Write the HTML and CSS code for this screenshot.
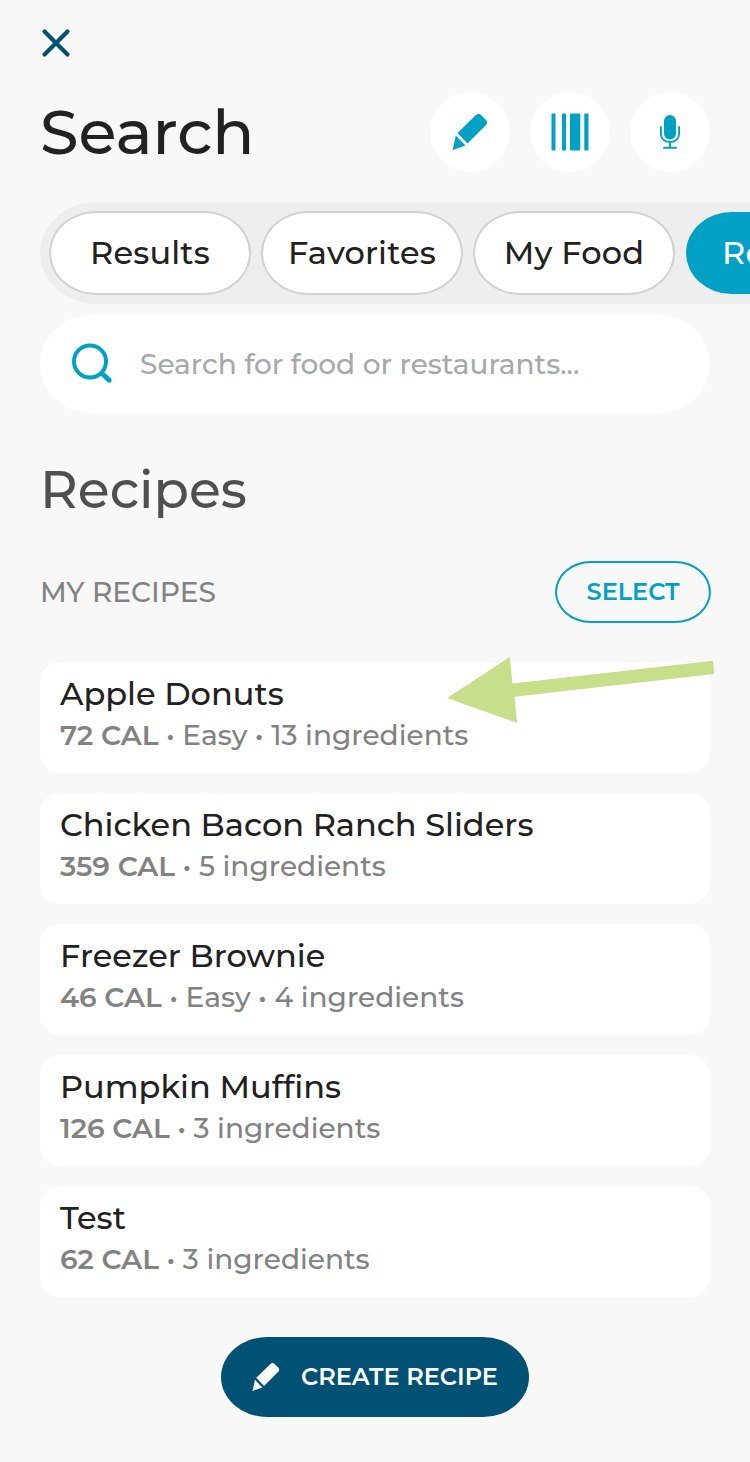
FILE: index.html
```html
<!DOCTYPE html>
<html lang="en">
<head>
    <meta charset="UTF-8">
    <meta name="viewport" content="width=device-width, initial-scale=1.0">
    <title>Search Recipes</title>
    <link rel="stylesheet" href="styles.css">
</head>
<body>
    <div class="container">
        <button class="close" type="button" aria-label="Close">
            <svg width="28" height="28" viewBox="0 0 28 28">
                <path d="M2.500 2.500 25.500 25.500M25.500 2.500 2.500 25.500" fill="none" stroke="currentColor" stroke-width="4.200" stroke-linecap="round"/>
            </svg>
        </button>

        <header class="header">
            <h1>Search</h1>
            <div class="actions">
                <button class="round-btn" type="button" aria-label="Quick add">
                    <svg width="36" height="36" viewBox="0 0 36 36" fill="currentColor">
                        <path d="M5.500 19 23.700 1.300Q26.500-1 29.200 1.200L34 6Q36.200 8.600 34 11L15.500 29.600Z"/>
                        <path d="M3.800 21.600 13.400 31.500.700 36Z"/>
                    </svg>
                </button>
                <button class="round-btn" type="button" aria-label="Scan barcode">
                    <svg width="38" height="38" viewBox="0 0 38 38" fill="currentColor">
                        <rect x="0.500" y="0.500" width="4" height="37" rx="0.700"/>
                        <rect x="11" y="0.500" width="4" height="37" rx="0.700"/>
                        <rect x="19" y="0.500" width="10.300" height="37" rx="0.700"/>
                        <rect x="33.300" y="0.500" width="4.200" height="37" rx="0.700"/>
                    </svg>
                </button>
                <button class="round-btn" type="button" aria-label="Voice search">
                    <svg width="20" height="34" viewBox="0 0 20 34">
                        <rect x="4" y="0" width="12" height="24.500" rx="6" fill="currentColor"/>
                        <path d="M.900 12V18Q.900 27 10 27T19.100 18V12M10 27V32.600M4 32.700H16" fill="none" stroke="currentColor" stroke-width="1.900" stroke-linecap="round"/>
                    </svg>
                </button>
            </div>
        </header>

        <nav class="tabs">
            <div class="tab">Results</div>
            <div class="tab">Favorites</div>
            <div class="tab">My Food</div>
            <div class="tab active">Recipes</div>
        </nav>

        <div class="search-box">
            <svg width="42" height="42" viewBox="0 0 42 42" fill="none" stroke="currentColor">
                <circle cx="19" cy="18.500" r="16" stroke-width="4"/>
                <path d="M31 30.500 38.200 37.200" stroke-width="5" stroke-linecap="round"/>
            </svg>
            <span>Search for food or restaurants...</span>
        </div>

        <h2>Recipes</h2>

        <div class="section-head">
            <h3>MY RECIPES</h3>
            <button class="select-btn" type="button">SELECT</button>
        </div>

        <div class="recipes">
            <div class="recipe">
                <div class="name">Apple Donuts</div>
                <div class="info"><b>72 CAL</b> • Easy • 13 ingredients</div>
                <svg class="arrow" width="268" height="68" viewBox="0 0 268 68">
                    <path d="M0 41 62.800 0 65.500 26.500 266 3.700 267.200 17 67.500 39.700 70 66Z" fill="#c7de8a"/>
                </svg>
            </div>
            <div class="recipe">
                <div class="name">Chicken Bacon Ranch Sliders</div>
                <div class="info"><b>359 CAL</b> • 5 ingredients</div>
            </div>
            <div class="recipe">
                <div class="name">Freezer Brownie</div>
                <div class="info"><b>46 CAL</b> • Easy • 4 ingredients</div>
            </div>
            <div class="recipe">
                <div class="name">Pumpkin Muffins</div>
                <div class="info"><b>126 CAL</b> • 3 ingredients</div>
            </div>
            <div class="recipe">
                <div class="name">Test</div>
                <div class="info"><b>62 CAL</b> • 3 ingredients</div>
            </div>
        </div>

        <button class="create-btn" type="button">
            <svg width="28" height="28" viewBox="0 0 36 36" fill="currentColor">
                <path d="M5.500 19 23.700 1.300Q26.500-1 29.200 1.200L34 6Q36.200 8.600 34 11L15.500 29.600Z"/>
                <path d="M3.800 21.600 13.400 31.500.700 36Z"/>
            </svg>
            <span>CREATE RECIPE</span>
        </button>
    </div>
</body>
</html>
```
FILE: styles.css
```css
* {
    box-sizing: border-box;
}

body {
    margin: 0;
    font-family: "Montserrat", "Inter", "Liberation Sans", sans-serif;
    font-weight: 500;
    background: #f8f8f8;
    color: #212121;
}

.container {
    width: 750px;
    height: 1462px;
    padding: 29px 40px 0;
    overflow: hidden;
}

svg {
    display: block;
    flex-shrink: 0;
    overflow: visible;
}

h1,
h2,
h3 {
    margin: 0;
    font-weight: 500;
    white-space: nowrap;
}

button {
    padding: 0;
    border: none;
    background: none;
    font-family: inherit;
}

.close {
    display: block;
    margin-left: 2px;
    color: #005173;
}

.header {
    display: flex;
    justify-content: space-between;
    align-items: center;
    height: 80px;
    margin-top: 35px;
}

h1 {
    font-size: 62px;
    line-height: 80px;
}

.actions {
    display: flex;
    gap: 20px;
}

.round-btn {
    display: flex;
    justify-content: center;
    align-items: center;
    width: 80px;
    height: 80px;
    border-radius: 50%;
    background: #fff;
    color: #00a1c4;
}

/* runs off the right edge of the screen */
.tabs {
    display: flex;
    gap: 10px;
    width: 870px;
    height: 102px;
    margin-top: 30px;
    padding: 9px;
    border-radius: 56px / 51px;
    background: #eee;
}

.tab {
    flex-shrink: 0;
    width: 202px;
    height: 84px;
    border: 2px solid #d0d3d4;
    border-radius: 47px / 42px;
    background: #fff;
    font-size: 32px;
    line-height: 80px;
    letter-spacing: 0.2px;
    text-align: center;
}

.tab.active {
    height: 82px;
    margin: 1px 0 0 1px;
    border: none;
    background: #00a1c4;
    color: #fff;
    padding-left: 36px;
    line-height: 82px;
    text-align: left;
}

.search-box {
    display: flex;
    align-items: center;
    gap: 27px;
    height: 100px;
    margin-top: 10px;
    padding-left: 31px;
    border-radius: 54px / 50px;
    background: #fff;
    color: #00a1c4;
}

.search-box span {
    color: #a6a8ab;
    font-size: 28px;
    white-space: nowrap;
}

h2 {
    height: 70px;
    margin-top: 41px;
    color: #4f4f4f;
    font-size: 52px;
    line-height: 70px;
}

.section-head {
    display: flex;
    justify-content: space-between;
    align-items: center;
    height: 62px;
    margin: 36px -1px 39px 0;
}

h3 {
    color: #828282;
    font-size: 28px;
}

.select-btn {
    width: 156px;
    height: 62px;
    padding-bottom: 2px;
    border: 2px solid #00a1c4;
    border-radius: 36px / 31px;
    color: #00a1c4;
    font-size: 24px;
    font-weight: 600;
}

.recipes {
    display: flex;
    flex-direction: column;
    gap: 20px;
}

.recipe {
    position: relative;
    height: 111px;
    padding: 12px 20px;
    border-radius: 20px;
    background: #fff;
}

.name {
    font-size: 32px;
    line-height: 40px;
    white-space: nowrap;
}

.info {
    color: #828282;
    font-size: 28px;
    line-height: 42px;
    white-space: nowrap;
}

.info b {
    font-weight: 600;
}

.arrow {
    position: absolute;
    top: -5px;
    left: 407px;
}

.create-btn {
    display: flex;
    align-items: center;
    gap: 21px;
    width: 308px;
    height: 80px;
    margin: 40px auto 0;
    padding-left: 31px;
    border-radius: 46px / 40px;
    background: #005173;
    color: #fff;
    font-size: 24px;
    font-weight: 600;
    white-space: nowrap;
}

.create-btn span {
    margin-top: -2px;
}
```
